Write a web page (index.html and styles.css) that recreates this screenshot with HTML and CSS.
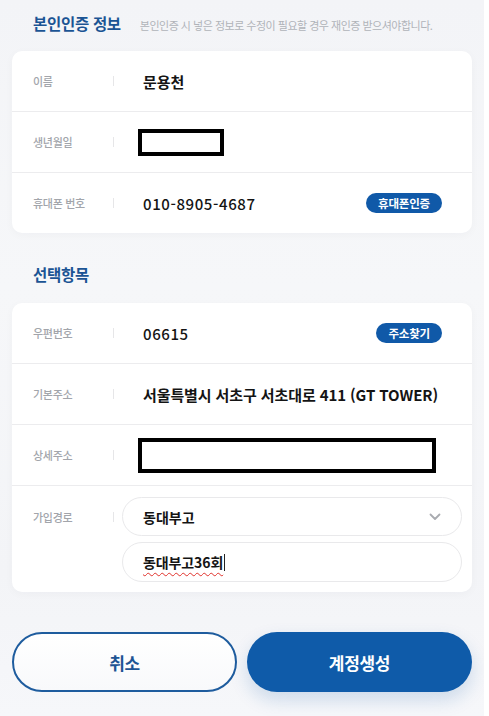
FILE: index.html
```html
<!DOCTYPE html>
<html lang="ko">
<head>
<meta charset="utf-8">
<link rel="stylesheet" href="styles.css">
</head>
<body>
<div class="page">
  <div class="sec-head">
    <h2 class="sec-title">본인인증 정보</h2>
    <span class="sec-desc">본인인증 시 넣은 정보로 수정이 필요할 경우 재인증 받으셔야합니다.</span>
  </div>
  <div class="card">
    <div class="row">
      <div class="label">이름</div>
      <div class="sep"></div>
      <div class="value">문용천</div>
    </div>
    <div class="row">
      <div class="label">생년월일</div>
      <div class="sep"></div>
      <div class="value"><span class="redact redact-s"></span></div>
    </div>
    <div class="row">
      <div class="label">휴대폰 번호</div>
      <div class="sep"></div>
      <div class="value num">010-8905-4687</div>
      <span class="badge">휴대폰인증</span>
    </div>
  </div>

  <div class="sec-head sec-head-2">
    <h2 class="sec-title">선택항목</h2>
  </div>
  <div class="card">
    <div class="row">
      <div class="label">우편번호</div>
      <div class="sep"></div>
      <div class="value num">06615</div>
      <span class="badge">주소찾기</span>
    </div>
    <div class="row">
      <div class="label">기본주소</div>
      <div class="sep"></div>
      <div class="value addr">서울특별시 서초구 서초대로 411 (GT TOWER)</div>
    </div>
    <div class="row">
      <div class="label">상세주소</div>
      <div class="sep"></div>
      <div class="value"><span class="redact redact-l"></span></div>
    </div>
    <div class="row row-join">
      <div class="join-label">
        <div class="label">가입경로</div>
        <div class="sep"></div>
      </div>
      <div class="join-fields">
        <div class="field select">
          <span>동대부고</span>
          <svg class="chev" width="12" height="8" viewBox="0 0 12 8"><path d="M1.5 1.5 L6 6 L10.5 1.5" fill="none" stroke="#a9abb0" stroke-width="1.8" stroke-linecap="round" stroke-linejoin="round"/></svg>
        </div>
        <div class="field input"><span class="typed">동대부고36회</span><span class="caret"></span></div>
      </div>
    </div>
  </div>

  <div class="actions">
    <button class="btn btn-cancel">취소</button>
    <button class="btn btn-primary">계정생성</button>
  </div>
</div>
</body>
</html>
```
FILE: styles.css
```css
* { box-sizing: border-box; }
html, body { margin: 0; padding: 0; }
body {
  background: #ffffff;
  font-family: "Noto Sans CJK KR", "Noto Sans", sans-serif;
  color: #111;
}
.page {
  width: 484px;
  height: 716px;
  padding: 0 12px;
  background: linear-gradient(180deg, #f3f4f7 0%, #f6f7f9 40%, #f3f4f7 80%, #f6f7fa 100%);
  overflow: hidden;
}
.sec-head {
  display: flex;
  align-items: baseline;
  gap: 19px;
  padding: 11px 0 0 21px;
  height: 51px;
}
.sec-head-2 {
  height: 70px;
  padding-top: 29px;
}
.sec-title {
  margin: 0;
  font-size: 15.5px;
  font-weight: 700;
  color: #1b5494;
  letter-spacing: -0.3px;
  line-height: 24px;
}
.sec-desc {
  font-size: 11px;
  color: #b0b3b9;
  letter-spacing: -0.5px;
}
.card {
  background: #ffffff;
  border-radius: 10px;
  box-shadow: 0 2px 10px rgba(30, 40, 70, 0.03);
}
.row {
  display: flex;
  align-items: center;
  height: 61px;
  padding: 0 30px 0 21px;
  border-top: 1px solid #ececee;
}
.row:first-child { border-top: none; height: 60px; }
.label {
  width: 80px;
  font-size: 11px;
  font-weight: 500;
  color: #a2a5ab;
  letter-spacing: -0.3px;
  flex-shrink: 0;
}
.sep {
  width: 1px;
  height: 10px;
  background: #e6e6e8;
  flex-shrink: 0;
}
.value {
  flex: 1;
  margin-left: 29px;
  font-size: 15px;
  font-weight: 600;
  color: #141414;
  display: flex;
  align-items: center;
}
.num { font-weight: 500; letter-spacing: 0.6px; }
.addr { letter-spacing: -0.1px; white-space: nowrap; }
.badge {
  height: 20px;
  padding: 0 12px;
  border-radius: 10px;
  background: #1059a8;
  color: #fff;
  font-size: 11.5px;
  font-weight: 700;
  line-height: 20px;
  letter-spacing: -0.2px;
}
.redact {
  display: block;
  margin-left: -5px;
  border: 4px solid #000;
  background: #fff;
}
.redact-s { width: 86px; height: 27px; }
.redact-l { width: 298px; height: 35px; }
.row-join {
  height: auto;
  align-items: flex-start;
  padding: 11px 10px 10px 21px;
}
.join-label {
  display: flex;
  align-items: center;
  height: 39px;
}
.join-fields {
  flex: 1;
  margin-left: 8px;
  display: flex;
  flex-direction: column;
  gap: 6px;
}
.field {
  height: 40px;
  border: 1px solid #e9e9eb;
  border-radius: 20px;
  padding: 0 20px;
  display: flex;
  align-items: center;
  font-size: 14px;
  font-weight: 600;
  color: #141414;
}
.select { height: 39px; justify-content: space-between; padding-right: 20px; }
.chev { margin-top: 1px; }
.typed {
  text-decoration: underline wavy #e0322c;
  text-decoration-thickness: 1px;
  text-underline-offset: 4px;
  letter-spacing: -0.1px;
}
.caret {
  width: 1px;
  height: 17px;
  background: #222;
  margin-left: 1px;
}
.actions {
  display: flex;
  gap: 10px;
  margin-top: 40px;
}
.btn {
  flex: none;
  width: 225px;
  height: 60px;
  padding: 0;
  border-radius: 30px;
  font-family: inherit;
  font-size: 17px;
  font-weight: 700;
  letter-spacing: -0.3px;
}
.btn-cancel {
  background: linear-gradient(180deg, #ffffff 0%, #f8f9fb 100%);
  border: 2px solid #1e5c9e;
  color: #1e5494;
}
.btn-primary {
  background: #0f5ba9;
  border: none;
  color: #fff;
  box-shadow: 0 8px 18px rgba(16, 89, 168, 0.18);
}
```
